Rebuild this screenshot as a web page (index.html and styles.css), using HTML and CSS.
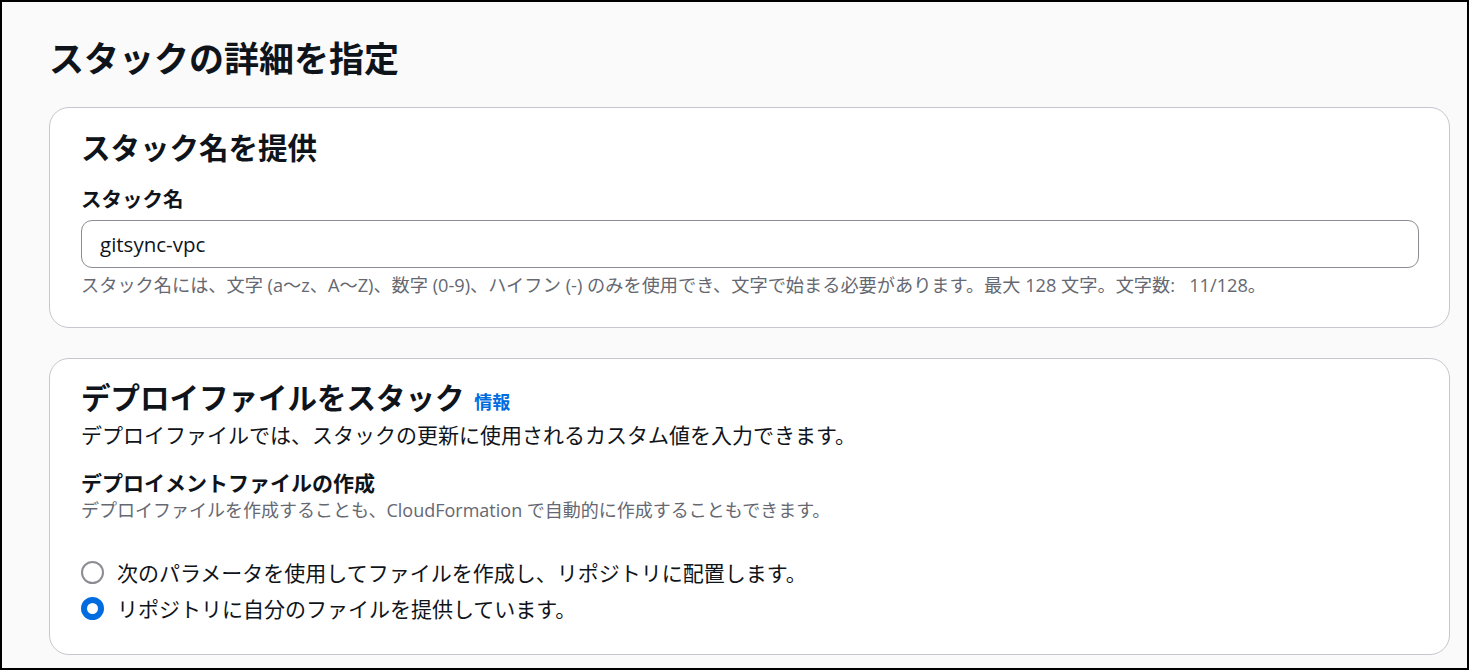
FILE: index.html
```html
<!DOCTYPE html>
<html lang="ja">
<head>
    <meta charset="utf-8">
    <title>スタックの詳細を指定</title>
    <link rel="stylesheet" href="styles.css">
</head>
<body>
<div class="page">
    <h1 class="page-title">スタックの詳細を指定</h1>

    <div class="card">
        <h2 class="card-title">スタック名を提供</h2>
        <div class="field">
            <label class="field-label" for="stack_name">スタック名</label>
            <input type="text" id="stack_name" class="text-input" value="gitsync-vpc">
            <p class="field-hint">スタック名には、文字 (a〜z、A〜Z)、数字 (0-9)、ハイフン (-) のみを使用でき、文字で始まる必要があります。最大 128 文字。文字数:&nbsp;&nbsp; 11/128。</p>
        </div>
    </div>

    <div class="card card-deploy">
        <h2 class="card-title">デプロイファイルをスタック <a href="#" class="info-link">情報</a></h2>
        <p class="card-desc">デプロイファイルでは、スタックの更新に使用されるカスタム値を入力できます。</p>

        <div class="field field-deploy">
            <div class="field-label">デプロイメントファイルの作成</div>
            <p class="field-desc">デプロイファイルを作成することも、CloudFormation で自動的に作成することもできます。</p>

            <div class="radio-group">
                <label class="radio-row">
                    <input type="radio" name="deploy_file" class="radio">
                    <span>次のパラメータを使用してファイルを作成し、リポジトリに配置します。</span>
                </label>
                <label class="radio-row">
                    <input type="radio" name="deploy_file" class="radio" checked>
                    <span>リポジトリに自分のファイルを提供しています。</span>
                </label>
            </div>
        </div>
    </div>
</div>
</body>
</html>
```

FILE: styles.css
```css
*{
    padding: 0;
    margin: 0;
    box-sizing: border-box;
}

body{
    font-family: "Open Sans", "Noto Sans CJK JP", sans-serif;
    color: #0f141a;
}

.page{
    width: 1469px;
    height: 670px;
    overflow: hidden;
    border: 2px solid #000;
    background-color: #fafafa;
    padding: 35px 17px 0 47px;
}

.page-title{
    font-size: 35px;
    font-weight: 700;
    line-height: 44px;
    margin-bottom: 26px;
}

/*白いカード*/
.card{
    background-color: #fff;
    border: 1px solid #c6c6cd;
    border-radius: 20px;
    padding: 22px 30px 30px 31px;
}

.card-deploy{
    margin-top: 30px;
    padding-top: 21px;
    padding-bottom: 28px;
}

.card-title{
    font-size: 29.5px;
    font-weight: 700;
    line-height: 36px;
}

.info-link{
    font-size: 18px;
    font-weight: 700;
    line-height: 1;
    color: #006ce0;
    text-decoration: none;
    margin-left: 2px;
}

.card-desc{
    font-size: 21px;
    line-height: 28px;
    margin-top: 5px;
    color: #0f141a;
}

.field{
    margin-top: 19px;
}

.field-deploy{
    margin-top: 20px;
}

.field-label{
    display: block;
    font-size: 20.5px;
    font-weight: 700;
    line-height: 28px;
}

.field-deploy .field-label{
    font-size: 21px;
}

.text-input{
    display: block;
    width: 100%;
    height: 48px;
    margin-top: 7px;
    padding: 0 18px;
    border: 1px solid #8c8c94;
    border-radius: 11px;
    font-family: inherit;
    font-size: 20.5px;
    color: #0f141a;
    outline: none;
}

.field-hint,
.field-desc{
    font-size: 18px;
    line-height: 24px;
    color: #656871;
}

.field-hint{
    margin-top: 5px;
    font-size: 18.2px;
}

.field-desc{
    margin-top: 1px;
}

.radio-group{
    margin-top: 32px;
}

.radio-row{
    display: flex;
    align-items: center;
    gap: 13px;
    height: 36px;
    font-size: 21px;
}

/*ラジオボタン*/
.radio{
    appearance: none;
    -webkit-appearance: none;
    width: 23px;
    height: 23px;
    border: 2px solid #8c8c94;
    border-radius: 50%;
    background-color: #fff;
    flex: none;
}

.radio:checked{
    border: 6px solid #006ce0;
}
```
